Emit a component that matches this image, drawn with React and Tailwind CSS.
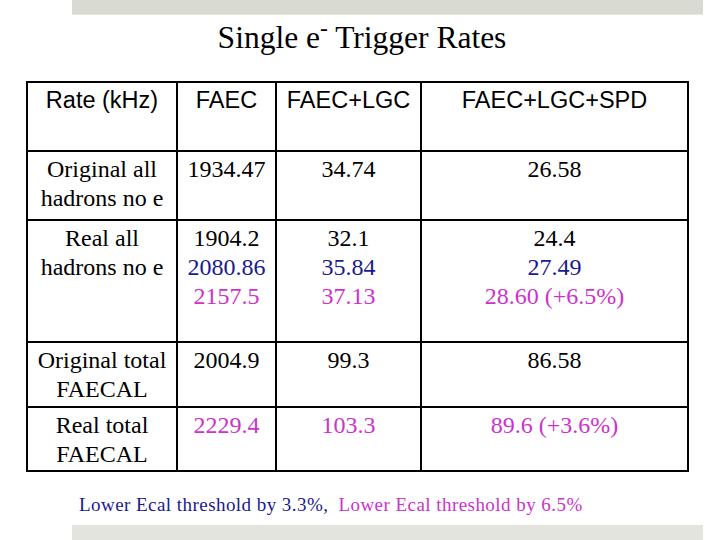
import React from "react";

const serif = { fontFamily: '"Liberation Serif", "Times New Roman", serif' };
const sans = { fontFamily: '"Liberation Sans", Arial, sans-serif' };

const BLUE = "text-[#1a1a8f]";
const PINK = "text-[#cc33cc]";

const rows = [
  {
    label: ["Original all", "hadrons no e"],
    cells: [
      [["1934.47", ""]],
      [["34.74", ""]],
      [["26.58", ""]],
    ],
  },
  {
    label: ["Real all", "hadrons no e"],
    cells: [
      [["1904.2", ""], ["2080.86", BLUE], ["2157.5", PINK]],
      [["32.1", ""], ["35.84", BLUE], ["37.13", PINK]],
      [["24.4", ""], ["27.49", BLUE], ["28.60 (+6.5%)", PINK]],
    ],
  },
  {
    label: ["Original total", "FAECAL"],
    cells: [
      [["2004.9", ""]],
      [["99.3", ""]],
      [["86.58", ""]],
    ],
  },
  {
    label: ["Real total", "FAECAL"],
    cells: [
      [["2229.4", PINK]],
      [["103.3", PINK]],
      [["89.6 (+3.6%)", PINK]],
    ],
  },
];

const Cell = ({ lines }) => (
  <div className="bg-white pt-[3px] text-center text-[24px] leading-[29px] text-black" style={serif}>
    {lines.map(([t, c], i) => (
      <div key={i} className={c}>
        {t}
      </div>
    ))}
  </div>
);

export default function App() {
  return (
    <div className="w-[720px] h-[540px] bg-white overflow-hidden flex flex-col">
      <div className="ml-[72px] w-[631px] h-[15px] bg-[#d9dbd3] border-b border-[#e6e7e1]" />

      <h1
        className="mt-[5px] text-center text-[31.5px] leading-[35px] text-black pl-[4px]"
        style={serif}
      >
        Single e<sup>-</sup> Trigger Rates
      </h1>

      <div className="ml-[26px] mt-[26px] w-fit grid grid-cols-[148px_97px_143px_265px] grid-rows-[67px_67px_120px_63px_62px] gap-[2px] bg-black p-[2px]">
        {["Rate (kHz)", "FAEC", "FAEC+LGC", "FAEC+LGC+SPD"].map((h) => (
          <div
            key={h}
            className="bg-white pt-[5px] text-center text-[23.5px] leading-[25px] text-black"
            style={sans}
          >
            {h}
          </div>
        ))}

        {rows.map((r, i) => (
          <React.Fragment key={i}>
            <Cell lines={r.label.map((t) => [t, ""])} />
            {r.cells.map((c, j) => (
              <Cell key={j} lines={c} />
            ))}
          </React.Fragment>
        ))}
      </div>

      <p className="ml-[79px] mt-[21px] text-[19px] leading-[23px] tracking-[0.45px]" style={serif}>
        <span className={BLUE}>Lower Ecal threshold by 3.3%,</span>
        <span className={`${PINK} ml-[10px]`}>Lower Ecal threshold by 6.5%</span>
      </p>

      <div className="ml-[72px] mt-[9px] w-[631px] h-[15px] bg-[#e3e4de]" />
    </div>
  );
}
